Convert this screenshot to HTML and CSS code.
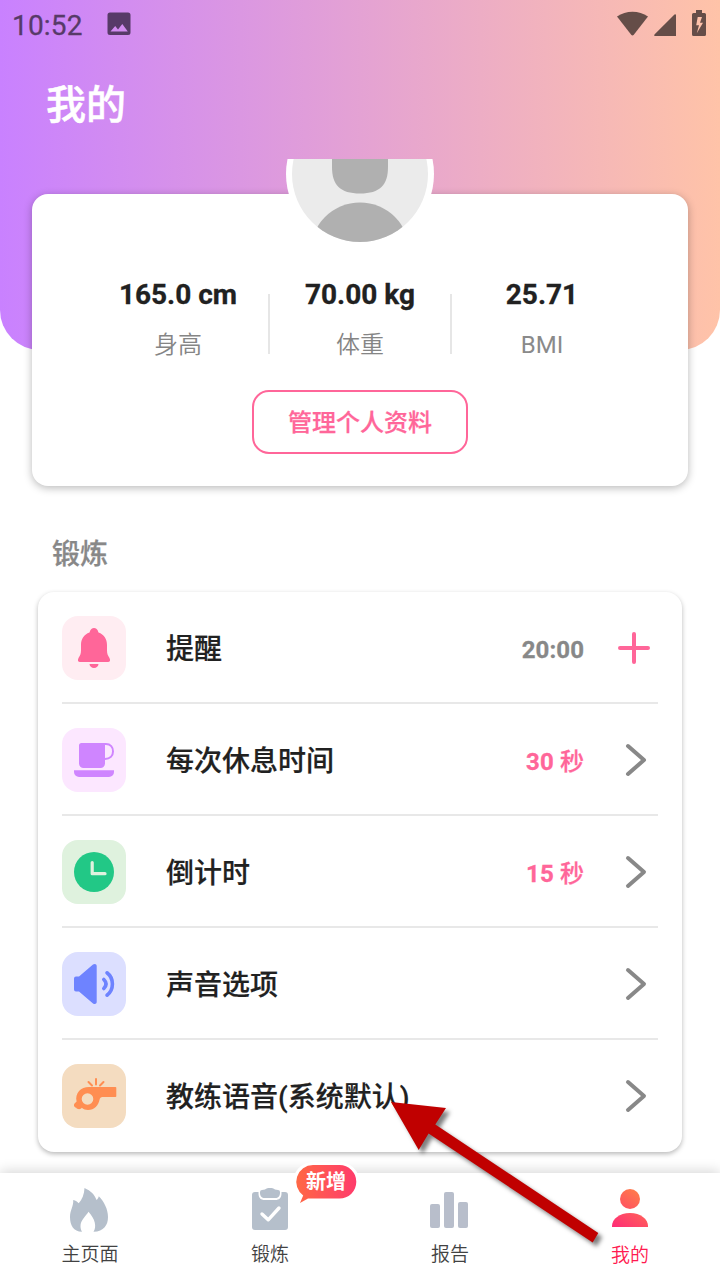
FILE: index.html
```html
<!DOCTYPE html>
<html lang="zh-CN">
<head>
<meta charset="utf-8">
<title>我的</title>
<link rel="stylesheet" href="styles.css">
</head>
<body>
<div class="screen">
  <header class="hero">
    <div class="status">
      <span class="time">10:52</span>
      <svg class="picture" width="24" height="24" viewBox="0 0 24 24"><path fill="#573a68" fill-rule="evenodd" d="M3 .5h18a2.500 2.500 0 0 1 2.500 2.500v17.500a2.500 2.500 0 0 1-2.500 2.500H3a2.500 2.500 0 0 1-2.500-2.500V3A2.500 2.500 0 0 1 3 .5zM3.500 19.500h17.300l-5.500-7.600-4.300 5.500-2.800-3.500z"/></svg>
      <svg class="signals" width="92" height="30" viewBox="616 8 92 30" fill="#654d48"><path d="M617 16.500C626 10 639 10 648 16.500L633.800 34.700Q632.500 36.300 631.200 34.700z"/><path d="M676 15v21h-21.300q-1.300-.6 0-1.800L674.500 14.400q1.300-.7 1.500.6z"/><path fill-rule="evenodd" d="M696 10h6v3h2.500a1.500 1.500 0 0 1 1.500 1.500v20a1.500 1.500 0 0 1-1.500 1.500h-11a1.500 1.500 0 0 1-1.500-1.500v-20a1.500 1.500 0 0 1 1.500-1.500h2.500zM697.700 17l-1.500 8.200h2.800l-2.200 8 6.200-10.400h-3l2-5.800z"/></svg>
    </div>
    <h1 class="title">我的</h1>
  </header>

  <main class="content">
    <section class="profile">
      <svg class="avatar" width="148" height="88" viewBox="286 159 148 88">
        <defs><clipPath id="face"><circle cx="360" cy="174" r="68"/></clipPath></defs>
        <circle cx="360" cy="174" r="74" fill="#fff"/>
        <g clip-path="url(#face)"><rect x="286" y="100" width="148" height="148" fill="#ebebeb"/><path fill="#b0b0b0" d="M332 130h56v37c0 18-8 26.500-28 26.500s-28-8.500-28-26.500z"/><circle cx="360" cy="252" r="49.500" fill="#b0b0b0"/></g>
      </svg>
      <div class="stats">
        <div class="stat"><strong>165.0 cm</strong><span>身高</span></div>
        <div class="stat"><strong>70.00 kg</strong><span>体重</span></div>
        <div class="stat"><strong>25.71</strong><span class="latin">BMI</span></div>
      </div>
      <button class="manage">管理个人资料</button>
    </section>

    <h2 class="section-title">锻炼</h2>
    <section class="settings">
      <div class="row">
        <svg class="chip pink" viewBox="0 0 64 64"><path fill="#ff6699" d="M27.500 16.500C28.500 13 30 12 32 12s3.500 1 4.500 4.500C42 18.500 45 23 45 29v5.500c0 3.500 1 5 2.500 7.500 1.200 2.600.4 4-1.500 4H18c-1.900 0-2.700-1.400-1.500-4 1.500-2.500 2.500-4 2.500-7.500V29c0-6 3-10.500 8.500-12.500zM27.500 48h9a4.500 4 0 0 1-9 0z"/></svg>
        <span class="name">提醒</span><span class="value muted">20:00</span>
        <svg class="action" width="36" height="36" viewBox="0 0 36 36"><path d="M2 18h28M16 4v28" stroke="#ff6699" stroke-width="4" stroke-linecap="round"/></svg>
      </div>
      <div class="row">
        <svg class="chip lilac" viewBox="0 0 64 64"><path fill="#cf85ff" d="M19.500 15H43v20.500a4.500 4.500 0 0 1-4.500 4.500H21.500a4.500 4.500 0 0 1-4.500-4.500V17.500a2.500 2.500 0 0 1 2.500-2.500zM12 42.300h40v1.700a5 5 0 0 1-5 5H17a5 5 0 0 1-5-5z"/><path fill="none" stroke="#cf85ff" stroke-width="2" d="M42 16h2c4.500 0 7 3.200 7 7.500S48 31 43 31"/></svg>
        <span class="name">每次休息时间</span><span class="value">30 <i>秒</i></span>
        <svg class="action" width="36" height="36" viewBox="0 0 36 36"><path class="chevron" d="M10 4l16 14-16 14"/></svg>
      </div>
      <div class="row">
        <svg class="chip mint" viewBox="0 0 64 64"><circle cx="32" cy="32" r="20" fill="#22c886"/><path d="M30.200 22.500v11.200H43" fill="none" stroke="#dff2de" stroke-width="3.200" stroke-linecap="round" stroke-linejoin="round"/></svg>
        <span class="name">倒计时</span><span class="value">15 <i>秒</i></span>
        <svg class="action" width="36" height="36" viewBox="0 0 36 36"><path class="chevron" d="M10 4l16 14-16 14"/></svg>
      </div>
      <div class="row">
        <svg class="chip blue" viewBox="0 0 64 64"><path fill="#6e83ff" d="M14 24.500h3L31 12.600c1.800-1.200 3.700-.5 3.700 1.400v36c0 1.900-1.900 2.600-3.700 1.400L17 39.500h-3a2 2 0 0 1-2-2v-11a2 2 0 0 1 2-2z"/><path fill="none" stroke="#6e83ff" stroke-width="3.600" stroke-linecap="round" d="M41.800 27.500q4.500 4.500 0 9M45 20.800c7.200 5.500 7.200 17 0 22.400"/></svg>
        <span class="name">声音选项</span>
        <svg class="action" width="36" height="36" viewBox="0 0 36 36"><path class="chevron" d="M10 4l16 14-16 14"/></svg>
      </div>
      <div class="row">
        <svg class="chip sand" viewBox="0 0 64 64"><path fill="#ff8e52" fill-rule="evenodd" d="M27 23h26.500q.8 0 .8.800v8.400q0 .8-.8.800H40.500c-1.800 0-2.500 1-2.900 2.600C36.300 42 32.500 46 26 46c-2.500 0-4.500-.8-6.200-2.200-.8 1.800-4.800 1.800-5.500-.1-2.600-.7-3.300-3.700-.7-5.300l1-.8C12.700 29 19 23 27 23zm-1.500 6.200a5.800 5.800 0 1 0 0 11.600 5.800 5.800 0 0 0 0-11.600z"/><path stroke="#ff8e52" stroke-width="2" stroke-linecap="round" d="M34 15v5.500M26.500 18l3.500 3.500M41.500 18L38 21.500"/></svg>
        <span class="name">教练语音(系统默认)</span>
        <svg class="action" width="36" height="36" viewBox="0 0 36 36"><path class="chevron" d="M10 4l16 14-16 14"/></svg>
      </div>
    </section>
  </main>

  <nav class="tabs">
    <a class="tab"><svg width="60" height="48" viewBox="0 0 60 48"><path fill="#b5bfcb" d="M24.500 2C31 5 34.500 8.500 36.500 14c1.300-1 2-2.300 2.300-3.800C44 15.500 48 23 48 31c0 8-4 14.500-14.500 14.800 3.500-5 1.500-13-5-20-2.800 4.500-8 8.500-8 14.500 0 2 .5 4 1.500 5.500C13.500 45.500 10 39.500 10 31c0-7 3.700-11 3.200-17 2.500.7 4.300 1.800 5.500 3.300C22 13.500 24.300 8.500 24.500 2z"/></svg><span>主页面</span></a>
    <a class="tab"><svg width="60" height="48" viewBox="0 0 60 48"><path fill="#b5bfcb" d="M18.500 6H15a3 3 0 0 0-3 3v32a3 3 0 0 0 3 3h30a3 3 0 0 0 3-3V9a3 3 0 0 0-3-3h-3.500v1.500C41.500 12 39 14 35.500 14h-11c-3.500 0-6-2-6-6.500z"/><path fill="#b5bfcb" d="M25 3.500C26.500 2.400 28 2 30 2s3.500.4 5 1.500l3 .5q2 .2 2 2v1c0 3-2 5-4.500 5h-11C22 12 20 10 20 7V6q0-1.800 2-2z"/><path fill="none" stroke="#fff" stroke-width="3.400" stroke-linecap="round" stroke-linejoin="round" d="M22 28l6.200 5.800L39 22"/></svg><span>锻炼</span>
      <span class="badge"><svg width="68" height="44" viewBox="0 0 68 44"><defs><linearGradient id="bubble"><stop stop-color="#ff6845"/><stop offset="1" stop-color="#ff3b6b"/></linearGradient></defs><path fill="url(#bubble)" stroke="#fff" stroke-width="6" paint-order="stroke" d="M21 3h26.500a16.800 16.800 0 0 1 0 33.600H16L8 41l3.200-7.600A16.800 16.800 0 0 1 21 3z"/></svg><b>新增</b></span>
    </a>
    <a class="tab"><svg width="60" height="48" viewBox="0 0 60 48" fill="#b8becb"><rect x="10" y="18" width="10" height="24" rx="2"/><rect x="24" y="6" width="10" height="36" rx="2"/><rect x="38" y="16" width="10" height="26" rx="2"/></svg><span>报告</span></a>
    <a class="tab active"><svg width="60" height="48" viewBox="0 0 60 48"><defs><linearGradient id="person" gradientUnits="userSpaceOnUse" x1="18" y1="44" x2="42" y2="8"><stop stop-color="#ff2d76"/><stop offset="1" stop-color="#ff7b4b"/></linearGradient></defs><g fill="url(#person)"><circle cx="30" cy="13" r="10"/><path d="M12 41v-1c0-7 7.500-13 18-13s18 6 18 13v1z"/></g></svg><span>我的</span></a>
  </nav>

  <svg class="pointer" width="230" height="160" viewBox="385 1095 230 160"><path fill="#c00000" d="M391 1102l55 6-10.700 16.500L598.300 1233l-5.600 9.600-164.100-109.200L418.700 1150z"/></svg>
</div>
</body>
</html>
```
FILE: styles.css
```css
* { box-sizing: border-box; }
body { margin: 0; font-family: Roboto, "Noto Sans CJK SC", sans-serif; color: #212121; background: #fff; }
.screen { position: relative; width: 720px; height: 1280px; overflow: hidden; display: flex; flex-direction: column; background: #fff; }
.hero { height: 350px; flex: none; border-radius: 0 0 40px 40px; background: linear-gradient(90deg, #c981ff, #ffc3a8); }
.status { display: flex; align-items: center; height: 48px; padding: 0 12px; }
.time { width: 71px; font-size: 28px; line-height: 48px; letter-spacing: .2px; color: #573a68; padding-top: 3px; -webkit-text-stroke: .3px #573a68; }
.picture { margin-left: 24px; }
.signals { margin-left: auto; margin-bottom: 2px; }
.title { margin: 29px 0 0 46px; font-size: 40px; line-height: 58px; font-weight: 500; color: #fff; -webkit-text-stroke: .5px #fff; }
.content { flex: none; height: 1014px; margin-top: -191px; }
.content::before { content: ""; display: table; }
.profile { position: relative; margin: 35px 32px 0; height: 292px; padding-top: 82px; border-radius: 16px; background: #fff; box-shadow: 0 2px 8px rgba(0,0,0,.28); display: flex; flex-direction: column; align-items: center; }
.avatar { position: absolute; left: 254px; top: -35px; }
.stats { display: flex; width: 546px; }
.stat { position: relative; width: 182px; height: 114px; display: flex; flex-direction: column; align-items: center; }
.stat + .stat::before { content: ""; position: absolute; left: -1px; top: 18px; width: 2px; height: 60px; background: #e6e6e6; }
.stat strong { font-size: 28px; line-height: 38px; font-weight: 700; -webkit-text-stroke: .3px #212121; }
.stat span { margin-top: 13px; font-size: 24px; line-height: 36px; font-weight: 350; color: #858585; }
.stat .latin { font-weight: 400; color: #8a8a8a; }
.manage { width: 216px; height: 64px; padding: 2px 0 0; border: 2px solid #ff6699; border-radius: 17px; background: #fff; color: #ff6699; font: 500 24px/58px Roboto, "Noto Sans CJK SC", sans-serif; -webkit-text-stroke: .25px #ff6699; }
.section-title { margin: 48px 0 0 52px; font-size: 28px; line-height: 42px; font-weight: 500; color: #888; -webkit-text-stroke: .25px #888; }
.settings { margin: 16px 38px 0; height: 560px; padding: 0 24px; border-radius: 16px; background: #fff; box-shadow: 0 2px 5px rgba(0,0,0,.28); }
.row { height: 112px; display: flex; align-items: center; border-top: 2px solid transparent; border-bottom: 2px solid #e8e8e8; }
.row:last-child { border-bottom-color: transparent; }
.chip { flex: none; width: 64px; height: 64px; border-radius: 16px; }
.pink { background: #ffedf2; }
.lilac { background: #fce7ff; }
.mint { background: #dff2de; }
.blue { background: #dcdfff; }
.sand { background: #f4dcc0; }
.name { margin-left: 40px; padding-top: 4px; font-size: 28px; line-height: 42px; font-weight: 500; -webkit-text-stroke: .2px #212121; }
.value { margin-left: auto; padding-top: 4px; font-size: 24px; line-height: 36px; font-weight: 700; letter-spacing: .1px; color: #ff6699; -webkit-text-stroke: .3px #ff6699; }
.value i { font-style: normal; font-weight: 500; }
.muted { color: #888; -webkit-text-stroke-color: #888; }
.action { flex: none; margin-left: 34px; margin-right: 4px; }
.name + .action { margin-left: auto; }
.chevron { fill: none; stroke: #888; stroke-width: 4; stroke-linecap: round; stroke-linejoin: round; }
.tabs { position: relative; flex: 1; display: flex; background: #fff; box-shadow: 0 -2px 12px rgba(0,0,0,.16); }
.tab { position: relative; width: 180px; padding-top: 13px; display: flex; flex-direction: column; align-items: center; font-size: 19px; line-height: 28px; font-weight: 350; color: #424242; }
.tab > span:not(.badge) { margin-top: 7px; }
.tab.active > span:not(.badge) { margin-top: 8px; }
.active { color: #ff1a50; }
.badge { position: absolute; left: 112px; top: -11px; width: 68px; height: 44px; }
.badge svg { display: block; overflow: visible; }
.badge b { position: absolute; left: 14px; top: 5px; font-size: 20px; line-height: 30px; font-weight: 700; color: #fff; white-space: nowrap; }
.pointer { position: absolute; left: 385px; top: 1095px; filter: drop-shadow(4px 4px 2px rgba(0,0,0,.5)); }
```
